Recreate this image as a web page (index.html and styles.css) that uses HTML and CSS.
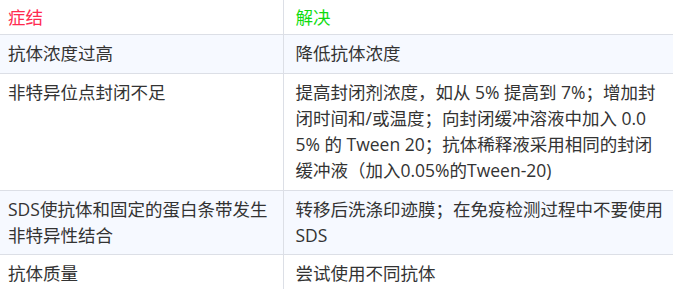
FILE: index.html
```html
<!DOCTYPE html>
<html lang="zh-CN">
<head>
<meta charset="utf-8">
<link rel="stylesheet" href="styles.css">
</head>
<body>
<table class="tbl">
  <colgroup><col class="c1"><col class="c2"></colgroup>
  <thead>
    <tr><th class="sym">症结</th><th class="sol">解决</th></tr>
  </thead>
  <tbody>
    <tr class="alt"><td>抗体浓度过高</td><td>降低抗体浓度</td></tr>
    <tr><td>非特异位点封闭不足</td><td>提高封闭剂浓度，如从 5% 提高到 7%；增加封闭时间和/或温度；向封闭缓冲溶液中加入 0.05% 的 Tween 20；抗体稀释液采用相同的封闭缓冲液（加入0.05%的Tween-20)</td></tr>
    <tr class="alt"><td>SDS使抗体和固定的蛋白条带发生非特异性结合</td><td>转移后洗涤印迹膜；在免疫检测过程中不要使用SDS</td></tr>
    <tr><td>抗体质量</td><td>尝试使用不同抗体</td></tr>
  </tbody>
</table>
</body>
</html>
```
FILE: styles.css
```css
html, body {
  margin: 0;
  padding: 0;
  background: #fff;
}
.tbl {
  border-collapse: collapse;
  table-layout: fixed;
  width: 673px;
  font-family: "Open Sans", "Noto Sans CJK SC", sans-serif;
  font-size: 17.5px;
  line-height: 26.25px;
  color: #333;
}
.c1 { width: 283px; }
.c2 { width: 390px; }
.tbl th, .tbl td {
  text-align: left;
  vertical-align: top;
  font-weight: normal;
  padding: 5px 4px 6px 12px;
  word-break: break-all;
  border-top: 1px solid #dcdfe6;
  border-bottom: 1px solid #dcdfe6;
}
.tbl th:first-child, .tbl td:first-child {
  padding-left: 8px;
  padding-right: 6px;
  border-right: 1px solid #dcdfe6;
}
.tbl thead th {
  border-top: none;
  padding-top: 4px;
  padding-bottom: 4px;
}
.alt td { background: #f6f9ff; }
.sym { color: #ff2a4f; }
.sol { color: #10dc10; }
```
